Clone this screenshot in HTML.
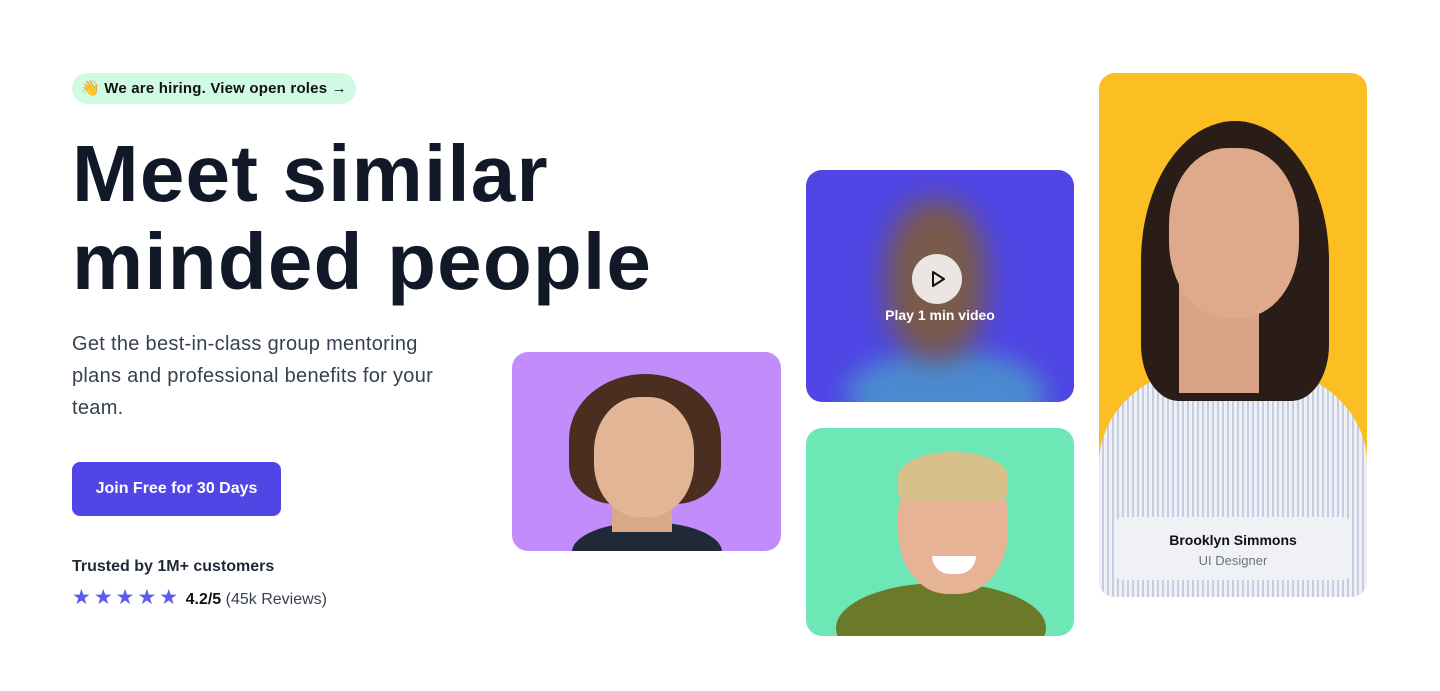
<!DOCTYPE html>
<html><head><style>
*{margin:0;padding:0;box-sizing:border-box}
body{width:1440px;height:691px;background:#fff;font-family:"Liberation Sans",sans-serif;position:relative;overflow:hidden;color:#111827}
.abs{position:absolute}
.pill{left:72px;top:73px;height:31px;width:284px;background:#d1fae5;border-radius:16px;font-size:15px;font-weight:bold;line-height:31px;padding-left:9px;color:#111;letter-spacing:0.2px}
h1{position:absolute;left:72px;top:130px;font-size:80px;line-height:88px;font-weight:bold;letter-spacing:1.2px;color:#111827}
.p{left:72px;top:328px;width:385px;font-size:20px;line-height:32px;color:#374151;letter-spacing:0.3px}
.btn{left:72px;top:462px;width:209px;height:54px;background:#4f46e5;border-radius:8px;color:#fff;font-weight:bold;font-size:16px;text-align:center;line-height:54px}
.card{position:absolute;border-radius:16px;overflow:hidden}
</style></head><body>
<div class="abs pill">👋 We are hiring. View open roles →</div>
<h1>Meet similar<br>minded people</h1>
<div class="abs p">Get the best-in-class group mentoring plans and professional benefits for your team.</div>
<div class="abs btn">Join Free for 30 Days</div>
<div class="abs" style="left:72px;top:558px;font-size:16px;font-weight:bold;color:#1f2937">Trusted by 1M+ customers</div>
<div class="abs" style="left:72px;top:585px;font-size:16px;color:#374151"><span style="color:#5b5bf0;font-size:21px;letter-spacing:3px">★★★★★</span> <b style="color:#111">4.2/5</b> (45k Reviews)</div>

<div class="card" style="left:512px;top:352px;width:269px;height:199px;background:#c28cfb">
<div class="abs" style="left:60px;top:170px;width:150px;height:60px;background:#1f2937;border-radius:50%"></div>
<div class="abs" style="left:100px;top:130px;width:60px;height:50px;background:#d9a88a"></div>
<div class="abs" style="left:57px;top:22px;width:152px;height:130px;background:#4a2e1f;border-radius:50% 50% 30% 30%"></div>
<div class="abs" style="left:82px;top:45px;width:100px;height:120px;background:#e2b596;border-radius:45%"></div>
</div>

<div class="card" style="left:806px;top:170px;width:268px;height:232px;background:#4f46e5">
<div class="abs" style="left:40px;top:180px;width:200px;height:90px;background:#4b8ad0;border-radius:50%;filter:blur(12px)"></div>
<div class="abs" style="left:80px;top:30px;width:100px;height:160px;background:#7a5a4a;border-radius:45%;filter:blur(14px)"></div>
<div class="abs" style="left:106px;top:84px;width:50px;height:50px;background:rgba(255,255,255,.85);border-radius:50%"></div>
<svg class="abs" style="left:122px;top:99px" width="20" height="20" viewBox="0 0 20 20"><path d="M5 3 L16 10 L5 17 Z" fill="none" stroke="#111" stroke-width="2" stroke-linejoin="round"/></svg>
<div class="abs" style="left:0;width:268px;top:137px;text-align:center;color:#fff;font-weight:bold;font-size:14px">Play 1 min video</div>
</div>

<div class="card" style="left:806px;top:428px;width:268px;height:208px;background:#6ee7b7">
<div class="abs" style="left:30px;top:155px;width:210px;height:90px;background:#6b7a2a;border-radius:50%"></div>
<div class="abs" style="left:92px;top:26px;width:110px;height:140px;background:#e6b396;border-radius:45%"></div>
<div class="abs" style="left:92px;top:24px;width:110px;height:50px;background:#d8c08a;border-radius:50% 50% 20% 20%"></div>
<div class="abs" style="left:126px;top:128px;width:44px;height:18px;background:#fff;border-radius:0 0 20px 20px"></div>
</div>

<div class="card" style="left:1099px;top:73px;width:268px;height:524px;background:#fbbf24">
<div class="abs" style="left:0;top:295px;width:268px;height:240px;background:repeating-linear-gradient(90deg,#eef0f6 0 3px,#c7cde0 3px 5px);border-radius:40% 40% 0 0"></div>
<div class="abs" style="left:42px;top:48px;width:188px;height:280px;background:#2a1d17;border-radius:50% 50% 20% 20%"></div>
<div class="abs" style="left:80px;top:210px;width:80px;height:110px;background:#d9a386"></div>
<div class="abs" style="left:70px;top:75px;width:130px;height:170px;background:#dfa98b;border-radius:45%"></div>
<div class="abs" style="left:15px;top:444px;width:238px;height:63px;background:rgba(240,241,246,.95);border-radius:10px;text-align:center">
<div style="font-weight:bold;font-size:14px;margin-top:15px;color:#111">Brooklyn Simmons</div>
<div style="font-size:13px;color:#6b7280;margin-top:5px">UI Designer</div>
</div>
</div>
</body></html>
